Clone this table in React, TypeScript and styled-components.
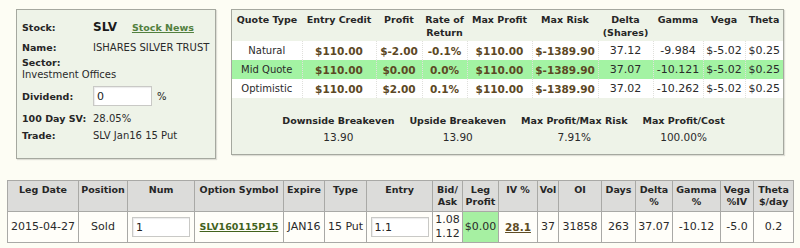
import React from "react";
import styled, { createGlobalStyle } from "styled-components";

const Global = createGlobalStyle`
  html, body { margin: 0; padding: 0; background: #fdfdf4; }
  body { font-family: "DejaVu Sans", Verdana, sans-serif; color: #222; }
  * { box-sizing: border-box; }
`;

const Page = styled.div`
  width: 800px;
  height: 248px;
  overflow: hidden;
  padding-top: 9px;
`;

const TopRow = styled.div`
  display: flex;
  align-items: flex-start;
  gap: 15px;
  padding-left: 16px;
`;

const Panel = styled.div<{ $w: number; $h: number }>`
  width: ${(p) => p.$w}px;
  height: ${(p) => p.$h}px;
  background: #eef3e8;
  border: 1px solid #a5a89f;
  box-shadow: 1px 1px 1px rgba(0, 0, 0, 0.12);
`;

const InfoBody = styled.div`
  padding: 7px 0 0 5px;
  display: flex;
  flex-direction: column;
`;

const InfoRow = styled.div<{ $h: number }>`
  display: flex;
  align-items: center;
  height: ${(p) => p.$h}px;
  font-size: 10px;
`;

const Label = styled.span`
  width: 71px;
  flex: none;
  font-size: 9.5px;
  font-weight: bold;
  color: #262626;
`;

const Value = styled.span`
  font-size: 10px;
  color: #2a2a2a;
  white-space: nowrap;
`;

const Ticker = styled.span`
  font-size: 12px;
  font-weight: bold;
  color: #1a1a1a;
`;

const NewsLink = styled.a`
  margin-left: 15px;
  font-size: 9.5px;
  font-weight: bold;
  color: #52803e;
  text-decoration: underline;
`;

const SectorBlock = styled.div`
  display: flex;
  flex-direction: column;
  line-height: 12px;
  height: 24px;
`;

const SmallInput = styled.input<{ $w: number }>`
  width: ${(p) => p.$w}px;
  height: 20px;
  border: 1px solid #c9c9c6;
  box-shadow: inset 1px 1px 1px rgba(0, 0, 0, 0.08);
  background: #fff;
  font-family: "DejaVu Sans", Verdana, sans-serif;
  font-size: 11px;
  padding: 0 3px;
  color: #222;
  outline: none;
`;

const Percent = styled.span`
  margin-left: 5px;
  font-size: 10px;
`;

const QuoteTable = styled.table`
  width: 551px;
  border-collapse: collapse;
  table-layout: fixed;
`;

const QHead = styled.th`
  height: 31px;
  padding: 3px 0 0;
  vertical-align: top;
  font-size: 9.5px;
  font-weight: bold;
  line-height: 13px;
  text-align: center;
  color: #262626;
`;

const QRow = styled.tr<{ $hl?: boolean }>`
  background: ${(p) => (p.$hl ? "#a3f3a3" : "#ffffff")};
`;

const QCell = styled.td<{ $bold?: boolean; $size: number }>`
  height: 19px;
  padding: 0;
  text-align: center;
  white-space: nowrap;
  border-left: 1px dotted #e0e0dc;
  font-size: ${(p) => p.$size}px;
  font-weight: ${(p) => (p.$bold ? "bold" : "normal")};
  color: ${(p) => (p.$bold ? "#5c4824" : "#2a2a2a")};
  &:first-child { border-left: none; }
`;

const StatsRow = styled.div`
  display: flex;
  justify-content: center;
  margin-top: 16px;
  padding-right: 8px;
`;

const Stat = styled.div`
  display: flex;
  flex-direction: column;
  align-items: center;
  padding: 0 7.5px;
`;

const StatLabel = styled.span`
  font-size: 9.5px;
  font-weight: bold;
  line-height: 13px;
  color: #262626;
  white-space: nowrap;
`;

const StatValue = styled.span`
  margin-top: 4px;
  font-size: 10.5px;
  line-height: 13px;
  color: #2a2a2a;
`;

const LegTable = styled.table`
  margin: 21px 0 0 7px;
  width: 786px;
  border-collapse: collapse;
  table-layout: fixed;
  background: #fffef9;
`;

const LHead = styled.th`
  height: 31px;
  border: 1px solid #a9a9a6;
  background: #dcdcda;
  font-size: 9.5px;
  font-weight: bold;
  line-height: 12px;
  vertical-align: top;
  padding: 3px 1px 0;
  text-align: center;
  color: #262626;
`;

const LCell = styled.td<{ $green?: boolean }>`
  height: 31px;
  border: 1px solid #a9a9a6;
  padding: 0 1px;
  font-size: 11px;
  line-height: 14px;
  text-align: center;
  vertical-align: middle;
  white-space: nowrap;
  color: #2a2a2a;
  background: ${(p) => (p.$green ? "#a6f0a2" : "transparent")};
`;

const SymbolLink = styled.a`
  font-size: 9.5px;
  font-weight: bold;
  color: #42621c;
  text-decoration: underline;
`;

const IvLink = styled.a`
  font-size: 10.5px;
  font-weight: bold;
  color: #5e4c24;
  text-decoration: underline;
`;

const quoteCols = [70, 74, 46, 45, 65, 66, 55, 50, 42, 38];
const quoteHeads = [
  "Quote Type",
  "Entry Credit",
  "Profit",
  "Rate of Return",
  "Max Profit",
  "Max Risk",
  "Delta (Shares)",
  "Gamma",
  "Vega",
  "Theta",
];
const quoteRows = [
  { name: "Natural", v: ["$110.00", "$-2.00", "-0.1%", "$110.00", "$-1389.90", "37.12", "-9.984", "$-5.02", "$0.25"] },
  { name: "Mid Quote", hl: true, v: ["$110.00", "$0.00", "0.0%", "$110.00", "$-1389.90", "37.07", "-10.121", "$-5.02", "$0.25"] },
  { name: "Optimistic", v: ["$110.00", "$2.00", "0.1%", "$110.00", "$-1389.90", "37.02", "-10.262", "$-5.02", "$0.25"] },
];

const stats = [
  ["Downside Breakeven", "13.90"],
  ["Upside Breakeven", "13.90"],
  ["Max Profit/Max Risk", "7.91%"],
  ["Max Profit/Cost", "100.00%"],
];

const legCols = [71, 49, 67, 89, 41, 42, 66, 30, 36, 39, 21, 43, 34, 37, 48, 33, 40];
const legHeads: React.ReactNode[] = [
  "Leg Date",
  "Position",
  "Num",
  "Option Symbol",
  "Expire",
  "Type",
  "Entry",
  <>Bid/<br />Ask</>,
  <>Leg<br />Profit</>,
  "IV %",
  "Vol",
  "OI",
  "Days",
  <>Delta<br />%</>,
  <>Gamma<br />%</>,
  <>Vega<br />%IV</>,
  <>Theta<br />$/day</>,
];

export default function App() {
  return (
    <Page>
      <Global />
      <TopRow>
        <Panel $w={200} $h={150}>
          <InfoBody>
            <InfoRow $h={20}>
              <Label>Stock:</Label>
              <Ticker>SLV</Ticker>
              <NewsLink href="#">Stock News</NewsLink>
            </InfoRow>
            <InfoRow $h={20}>
              <Label>Name:</Label>
              <Value>ISHARES SILVER TRUST</Value>
            </InfoRow>
            <SectorBlock>
              <Label>Sector:</Label>
              <Value>Investment Offices</Value>
            </SectorBlock>
            <InfoRow $h={30}>
              <Label>Dividend:</Label>
              <SmallInput $w={59} defaultValue="0" />
              <Percent>%</Percent>
            </InfoRow>
            <InfoRow $h={14}>
              <Label>100 Day SV:</Label>
              <Value>28.05%</Value>
            </InfoRow>
            <InfoRow $h={20}>
              <Label>Trade:</Label>
              <Value>SLV Jan16 15 Put</Value>
            </InfoRow>
          </InfoBody>
        </Panel>
        <Panel $w={553} $h={146}>
          <QuoteTable>
            <colgroup>
              {quoteCols.map((w, i) => (
                <col key={i} style={{ width: w }} />
              ))}
            </colgroup>
            <thead>
              <tr>
                {quoteHeads.map((h) => (
                  <QHead key={h}>{h}</QHead>
                ))}
              </tr>
            </thead>
            <tbody>
              {quoteRows.map((r) => (
                <QRow key={r.name} $hl={r.hl}>
                  <QCell $size={10}>{r.name}</QCell>
                  {r.v.map((v, i) => (
                    <QCell key={i} $bold={i < 5} $size={i < 5 ? 10.5 : 11}>
                      {v}
                    </QCell>
                  ))}
                </QRow>
              ))}
            </tbody>
          </QuoteTable>
          <StatsRow>
            {stats.map(([l, v]) => (
              <Stat key={l}>
                <StatLabel>{l}</StatLabel>
                <StatValue>{v}</StatValue>
              </Stat>
            ))}
          </StatsRow>
        </Panel>
      </TopRow>
      <LegTable>
        <colgroup>
          {legCols.map((w, i) => (
            <col key={i} style={{ width: w }} />
          ))}
        </colgroup>
        <thead>
          <tr>
            {legHeads.map((h, i) => (
              <LHead key={i}>{h}</LHead>
            ))}
          </tr>
        </thead>
        <tbody>
          <tr>
            <LCell>2015-04-27</LCell>
            <LCell>Sold</LCell>
            <LCell>
              <SmallInput $w={58} defaultValue="1" />
            </LCell>
            <LCell>
              <SymbolLink href="#">SLV160115P15</SymbolLink>
            </LCell>
            <LCell>JAN16</LCell>
            <LCell>15 Put</LCell>
            <LCell>
              <SmallInput $w={58} defaultValue="1.1" />
            </LCell>
            <LCell>
              1.08
              <br />
              1.12
            </LCell>
            <LCell $green>$0.00</LCell>
            <LCell>
              <IvLink href="#">28.1</IvLink>
            </LCell>
            <LCell>37</LCell>
            <LCell>31858</LCell>
            <LCell>263</LCell>
            <LCell>37.07</LCell>
            <LCell>-10.12</LCell>
            <LCell>-5.0</LCell>
            <LCell>0.2</LCell>
          </tr>
        </tbody>
      </LegTable>
    </Page>
  );
}
